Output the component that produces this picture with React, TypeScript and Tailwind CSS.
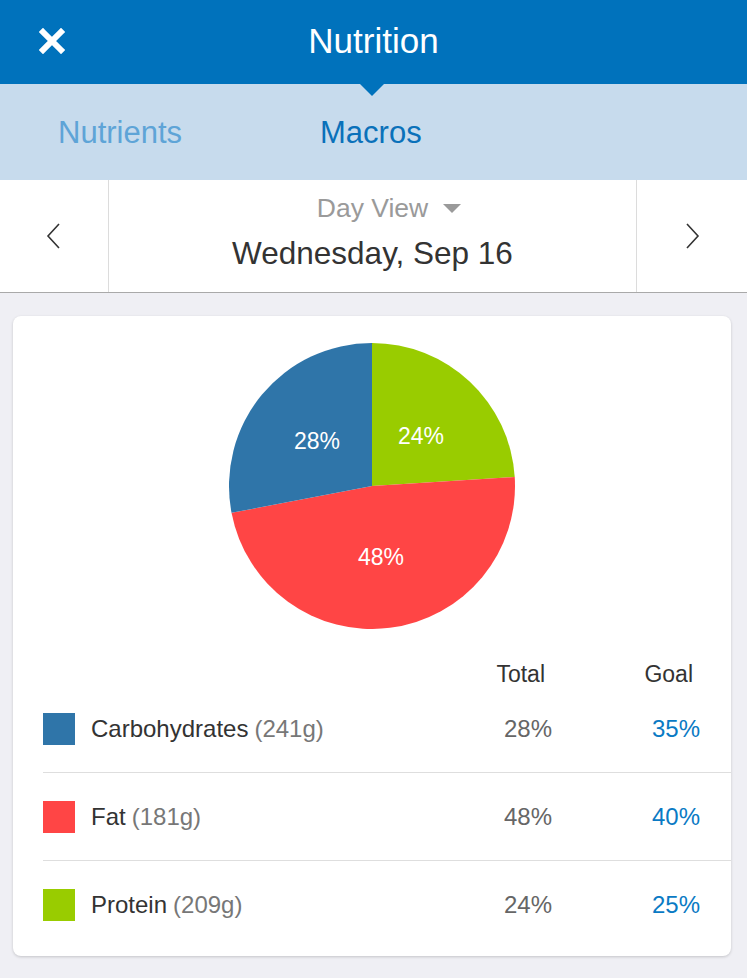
import React from "react";

const slices = [
  { label: "24%", pct: 24, color: "#99cc00", lx: 49, ly: -50 },
  { label: "48%", pct: 48, color: "#ff4545", lx: 9, ly: 71 },
  { label: "28%", pct: 28, color: "#2f75a9", lx: -55, ly: -45 },
];

const rows = [
  { name: "Carbohydrates", grams: "(241g)", color: "#2f75a9", total: "28%", goal: "35%" },
  { name: "Fat", grams: "(181g)", color: "#ff4545", total: "48%", goal: "40%" },
  { name: "Protein", grams: "(209g)", color: "#99cc00", total: "24%", goal: "25%" },
];

function Pie() {
  const r = 143;
  const c = 143;
  let start = 0;
  const pt = (deg: number) => {
    const a = (deg * Math.PI) / 180;
    return [c + r * Math.sin(a), c - r * Math.cos(a)];
  };
  return (
    <svg width={286} height={286} viewBox="0 0 286 286">
      {slices.map((s) => {
        const end = start + (s.pct / 100) * 360;
        const [x1, y1] = pt(start);
        const [x2, y2] = pt(end);
        const large = end - start > 180 ? 1 : 0;
        const d = `M ${c} ${c} L ${x1} ${y1} A ${r} ${r} 0 ${large} 1 ${x2} ${y2} Z`;
        start = end;
        return <path key={s.label} d={d} fill={s.color} />;
      })}
      {slices.map((s) => (
        <text
          key={s.label + "t"}
          x={c + s.lx}
          y={c + s.ly}
          textAnchor="middle"
          dominantBaseline="central"
          fill="#ffffff"
          style={{ fontFamily: '"Liberation Sans", Arial, sans-serif', fontSize: 23 }}
        >
          {s.label}
        </text>
      ))}
    </svg>
  );
}

export default function App() {
  return (
    <div
      className="w-[747px] h-[978px] bg-[#efeff4] overflow-hidden"
      style={{ fontFamily: '"Liberation Sans", Arial, sans-serif' }}
    >
      {/* top bar */}
      <div className="relative h-[84px] bg-[#0072bc] flex items-center justify-center">
        <svg className="absolute left-[39px] top-[28px]" width="26" height="26" viewBox="0 0 26 26">
          <path d="M4 4 L22 22 M22 4 L4 22" stroke="#ffffff" strokeWidth="6" strokeLinecap="square" />
        </svg>
        <span className="text-white text-[35px] leading-none -mt-[4px]">Nutrition</span>
        <div className="absolute left-[360px] top-[84px] w-0 h-0 border-l-[12px] border-r-[12px] border-t-[12px] border-l-transparent border-r-transparent border-t-[#0072bc] z-10" />
      </div>

      {/* tabs */}
      <div className="h-[96px] bg-[#c7dbed] flex items-center text-[31px] leading-none">
        <span className="ml-[58px] w-[262px] text-[#5ea4d7]">Nutrients</span>
        <span className="text-[#0a71ba]">Macros</span>
      </div>

      {/* date selector */}
      <div className="h-[113px] bg-white flex border-b border-[#a9a9a9]">
        <div className="w-[109px] border-r border-[#dcdcdc] flex items-center justify-center">
          <svg width="16" height="26" viewBox="0 0 16 26">
            <path d="M13 1 L2 13 L13 25" fill="none" stroke="#333" strokeWidth="1.6" />
          </svg>
        </div>
        <div className="flex-1 flex flex-col items-center pt-[13px]">
          <div className="relative text-[26.5px] leading-[30px] text-[#9a9a9a]">
            <span>Day View</span>
            <span className="absolute left-full top-[11px] ml-[15px] w-0 h-0 border-l-[9px] border-r-[9px] border-t-[9px] border-l-transparent border-r-transparent border-t-[#9a9a9a]" />
          </div>
          <div className="mt-[13px] text-[31.5px] leading-[34px] text-[#333]">Wednesday, Sep 16</div>
        </div>
        <div className="w-[111px] border-l border-[#dcdcdc] flex items-center justify-center">
          <svg width="16" height="26" viewBox="0 0 16 26">
            <path d="M3 1 L14 13 L3 25" fill="none" stroke="#333" strokeWidth="1.6" />
          </svg>
        </div>
      </div>

      {/* card */}
      <div className="mx-[13px] w-[718px] mt-[23px] bg-white rounded-[8px] shadow-[0_1px_3px_rgba(0,0,0,0.18)] pt-[27px] pb-[7px]">
        <div className="flex justify-center">
          <Pie />
        </div>
        <div className="h-[56px] pt-[34px] flex text-[23px] leading-[22px] text-[#333]">
          <div className="flex-1" />
          <div className="w-[110px] text-right pr-[38px]">Total</div>
          <div className="w-[148px] text-right pr-[38px]">Goal</div>
        </div>
        <div className="ml-[30px]">
          {rows.map((row, i) => (
            <div
              key={row.name}
              className={`h-[88px] flex items-center text-[24px] ${i < rows.length - 1 ? "border-b border-[#dedede]" : ""}`}
            >
              <div className="w-[32px] h-[32px]" style={{ backgroundColor: row.color }} />
              <div className="ml-[16px] flex-1">
                <span className="text-[#333]">{row.name}</span>
                <span className="text-[#777] ml-[6px]">{row.grams}</span>
              </div>
              <div className="w-[110px] text-right pr-[31px] text-[#666]">{row.total}</div>
              <div className="w-[148px] text-right pr-[31px] text-[#0a7ac4]">{row.goal}</div>
            </div>
          ))}
        </div>
      </div>
    </div>
  );
}
